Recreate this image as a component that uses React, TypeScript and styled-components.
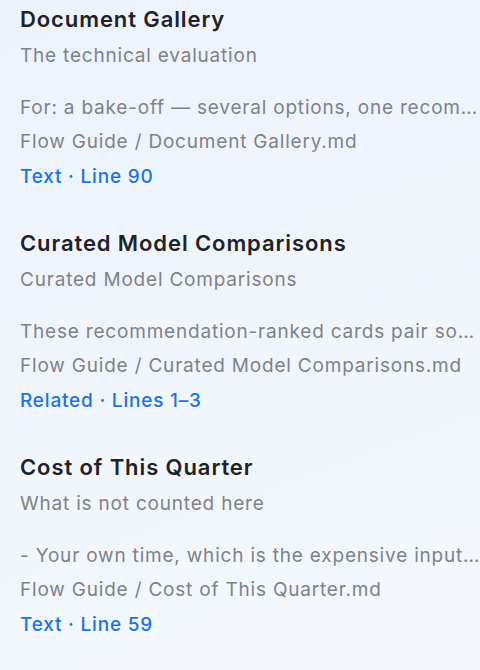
import React from "react";
import styled, { createGlobalStyle } from "styled-components";

const Global = createGlobalStyle`
  html, body { margin: 0; padding: 0; }
  body {
    min-height: 670px;
    background: linear-gradient(160deg, #edf3fc 0%, #f1f6fd 55%, #f4f8fe 100%);
    font-family: Inter, "Noto Sans", sans-serif;
    -webkit-font-smoothing: antialiased;
  }
`;

const List = styled.div`
  display: flex;
  flex-direction: column;
  gap: 34px;
  padding: 4px 0 0 20px;
  width: 480px;
  box-sizing: border-box;
  overflow: hidden;
`;

const Item = styled.div`
  display: flex;
  flex-direction: column;
  min-width: 0;
`;

const Title = styled.div`
  font-size: 22px;
  font-weight: 600;
  letter-spacing: 0.9px;
  line-height: 30px;
  color: #1f2227;
`;

const Sub = styled.div`
  font-size: 19px;
  letter-spacing: 0.8px;
  line-height: 34.5px;
  color: #7e8289;
  margin: 5px 0 17px;
`;

const Line = styled.div<{ $blue?: boolean }>`
  font-size: 19px;
  letter-spacing: 0.8px;
  line-height: 34.5px;
  color: ${(p) => (p.$blue ? "#1c73e3" : "#7e8289")};
  font-weight: ${(p) => (p.$blue ? 500 : 400)};
  white-space: nowrap;
  overflow: hidden;
  text-overflow: ellipsis;
`;

const items = [
  {
    title: "Document Gallery",
    sub: "The technical evaluation",
    excerpt: "For: a bake-off — several options, one recommendation",
    path: "Flow Guide / Document Gallery.md",
    link: "Text · Line 90",
  },
  {
    title: "Curated Model Comparisons",
    sub: "Curated Model Comparisons",
    excerpt: "These recommendation-ranked cards pair something",
    path: "Flow Guide / Curated Model Comparisons.md",
    link: "Related · Lines 1–3",
  },
  {
    title: "Cost of This Quarter",
    sub: "What is not counted here",
    excerpt: "- Your own time, which is the expensive input here",
    path: "Flow Guide / Cost of This Quarter.md",
    link: "Text · Line 59",
  },
];

export default function App() {
  return (
    <>
      <Global />
      <List>
        {items.map((it) => (
          <Item key={it.title}>
            <Title>{it.title}</Title>
            <Sub>{it.sub}</Sub>
            <Line>{it.excerpt}</Line>
            <Line>{it.path}</Line>
            <Line $blue>{it.link}</Line>
          </Item>
        ))}
      </List>
    </>
  );
}
